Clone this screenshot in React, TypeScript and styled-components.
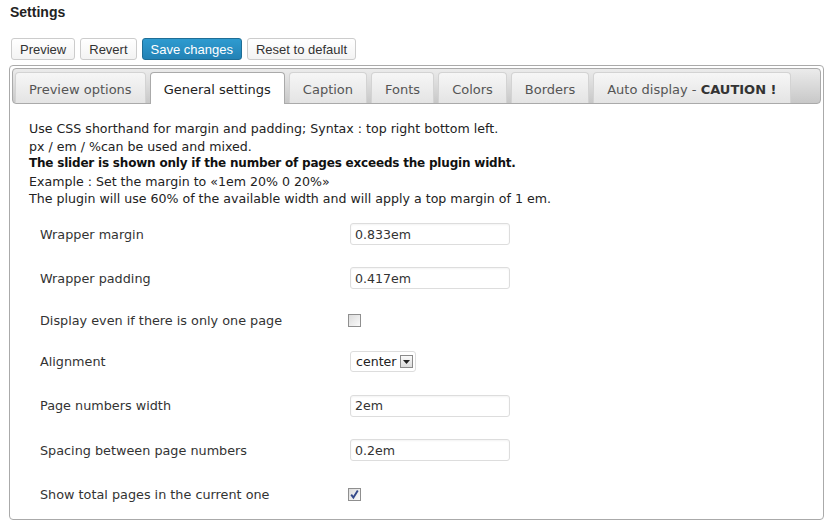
import React from 'react';
import styled, { createGlobalStyle } from 'styled-components';

const GlobalStyle = createGlobalStyle`
  html, body {
    margin: 0;
    padding: 0;
    background: #ffffff;
  }
  body {
    font-family: 'DejaVu Sans', Verdana, sans-serif;
    color: #333;
  }
`;

const tabs = [
  'Preview options',
  'General settings',
  'Caption',
  'Fonts',
  'Colors',
  'Borders',
];

interface IRow {
  label: string;
  kind: 'input' | 'checkbox' | 'select';
  value?: string;
  checked?: boolean;
  height: number;
}

const rows: IRow[] = [
  { label: 'Wrapper margin', kind: 'input', value: '0.833em', height: 43 },
  { label: 'Wrapper padding', kind: 'input', value: '0.417em', height: 45 },
  { label: 'Display even if there is only one page', kind: 'checkbox', checked: false, height: 39 },
  { label: 'Alignment', kind: 'select', value: 'center', height: 44 },
  { label: 'Page numbers width', kind: 'input', value: '2em', height: 44 },
  { label: 'Spacing between page numbers', kind: 'input', value: '0.2em', height: 45 },
  { label: 'Show total pages in the current one', kind: 'checkbox', checked: true, height: 44 },
];

export default function App() {
  return (
    <Page>
      <GlobalStyle />
      <Title>Settings</Title>
      <Toolbar>
        <Button>Preview</Button>
        <Button>Revert</Button>
        <Button primary>Save changes</Button>
        <Button>Reset to default</Button>
      </Toolbar>
      <Panel>
        <TabBar>
          {tabs.map((tab, index) => (
            <Tab key={tab} active={index === 1}>
              {tab}
            </Tab>
          ))}
          <Tab>
            Auto display - <b>CAUTION !</b>
          </Tab>
        </TabBar>
        <Content>
          <Intro>
            <p>Use CSS shorthand for margin and padding; Syntax : top right bottom left.</p>
            <p>px / em / %can be used and mixed.</p>
            <Strong>The slider is shown only if the number of pages exceeds the plugin widht.</Strong>
            <p>Example : Set the margin to «1em 20% 0 20%»</p>
            <p>The plugin will use 60% of the available width and will apply a top margin of 1 em.</p>
          </Intro>
          <Form>
            {rows.map((row) => (
              <Row key={row.label} height={row.height}>
                <Label>{row.label}</Label>
                <Field>
                  {row.kind === 'input' && <TextInput>{row.value}</TextInput>}
                  {row.kind === 'checkbox' && (
                    <Checkbox>
                      {row.checked && (
                        <svg width="11" height="11" viewBox="0 0 11 11">
                          <path
                            d="M2.2 5.6 L4.4 8.6 L8.8 1.6"
                            fill="none"
                            stroke="#34498a"
                            strokeWidth="1.9"
                          />
                        </svg>
                      )}
                    </Checkbox>
                  )}
                  {row.kind === 'select' && (
                    <Select>
                      {row.value}
                      <SelectArrow>
                        <svg width="7" height="4" viewBox="0 0 7 4">
                          <path d="M0 0 L7 0 L3.5 4 Z" fill="#222" />
                        </svg>
                      </SelectArrow>
                    </Select>
                  )}
                </Field>
              </Row>
            ))}
          </Form>
        </Content>
      </Panel>
    </Page>
  );
}

const Page = styled.div`
  width: 832px;
  height: 529px;
  padding: 4px 8px 0 9px;
  box-sizing: border-box;
  overflow: hidden;
`;

const Title = styled.div`
  font-family: 'Liberation Sans', Arial, sans-serif;
  font-weight: bold;
  font-size: 14px;
  color: #222;
  line-height: 16px;
  padding-left: 1px;
`;

const Toolbar = styled.div`
  display: flex;
  gap: 5px;
  margin-top: 18px;
  padding-left: 2px;
`;

const Button = styled.div<{ primary?: boolean }>`
  height: 22px;
  box-sizing: border-box;
  padding: 0 8px;
  display: flex;
  align-items: center;
  font-family: 'Liberation Sans', Arial, sans-serif;
  font-size: 13px;
  border-radius: 3px;
  border: 1px solid ${(p) => (p.primary ? '#1f6e96' : '#cccccc')};
  background: ${(p) =>
    p.primary
      ? 'linear-gradient(#2e9bd0, #2382b5)'
      : 'linear-gradient(#ffffff, #f3f3f3)'};
  color: ${(p) => (p.primary ? '#ffffff' : '#333333')};
`;

const Panel = styled.div`
  margin-top: 5px;
  height: 455px;
  box-sizing: border-box;
  border: 1px solid #aaaaaa;
  border-radius: 4px;
  padding: 2px;
`;

const TabBar = styled.div`
  height: 36px;
  box-sizing: border-box;
  display: flex;
  align-items: flex-end;
  gap: 4px;
  padding-left: 2px;
  border: 1px solid #aaaaaa;
  border-radius: 4px;
  background: linear-gradient(#ebebeb, #c8c8c8);
`;

const Tab = styled.div<{ active?: boolean }>`
  height: ${(p) => (p.active ? '32px' : '31px')};
  margin-bottom: ${(p) => (p.active ? '-1px' : '0')};
  box-sizing: border-box;
  padding: 2px 13px 0;
  display: flex;
  align-items: center;
  font-size: 13px;
  color: ${(p) => (p.active ? '#222222' : '#555555')};
  border: 1px solid ${(p) => (p.active ? '#aaaaaa' : '#d3d3d3')};
  border-bottom: none;
  border-radius: 4px 4px 0 0;
  background: ${(p) => (p.active ? '#ffffff' : 'linear-gradient(#f6f6f6, #e4e4e4)')};
  white-space: pre;

  b {
    color: #333;
  }
`;

const Content = styled.div`
  padding: 16px 17px 0;
`;

const Intro = styled.div`
  font-size: 12.6px;
  line-height: 17.6px;
  color: #222;

  p {
    margin: 0;
  }
`;

const Strong = styled.p`
  font-weight: bold;
  font-size: 12px;
  letter-spacing: -0.2px;
  color: #111;
`;

const Form = styled.div`
  margin-top: 5px;
  display: flex;
  flex-direction: column;
`;

const Row = styled.div<{ height: number }>`
  height: ${(p) => p.height}px;
  display: flex;
  align-items: center;
`;

const Label = styled.div`
  width: 310px;
  padding-left: 11px;
  font-size: 12.8px;
  color: #333;
`;

const Field = styled.div`
  display: flex;
  align-items: center;
`;

const TextInput = styled.div`
  width: 160px;
  height: 22px;
  box-sizing: border-box;
  border: 1px solid #dddddd;
  border-radius: 3px;
  box-shadow: inset 0 1px 2px rgba(0, 0, 0, 0.05);
  padding-left: 4px;
  display: flex;
  align-items: center;
  font-size: 12.6px;
  color: #333;
`;

const Checkbox = styled.div`
  width: 13px;
  height: 13px;
  margin-left: -2px;
  box-sizing: border-box;
  border: 1px solid #8f8f8f;
  background: linear-gradient(135deg, #dcdcdc, #fafafa);
  display: flex;
  align-items: center;
  justify-content: center;
`;

const Select = styled.div`
  height: 21px;
  box-sizing: border-box;
  border: 1px solid #dddddd;
  border-radius: 3px;
  padding: 0 2px 0 5px;
  display: flex;
  align-items: center;
  gap: 3px;
  font-size: 12.6px;
  color: #222;
`;

const SelectArrow = styled.div`
  width: 13px;
  height: 13px;
  box-sizing: border-box;
  border: 1px solid #8a8a8a;
  background: linear-gradient(#fafafa, #dcdcdc);
  display: flex;
  align-items: center;
  justify-content: center;
`;
